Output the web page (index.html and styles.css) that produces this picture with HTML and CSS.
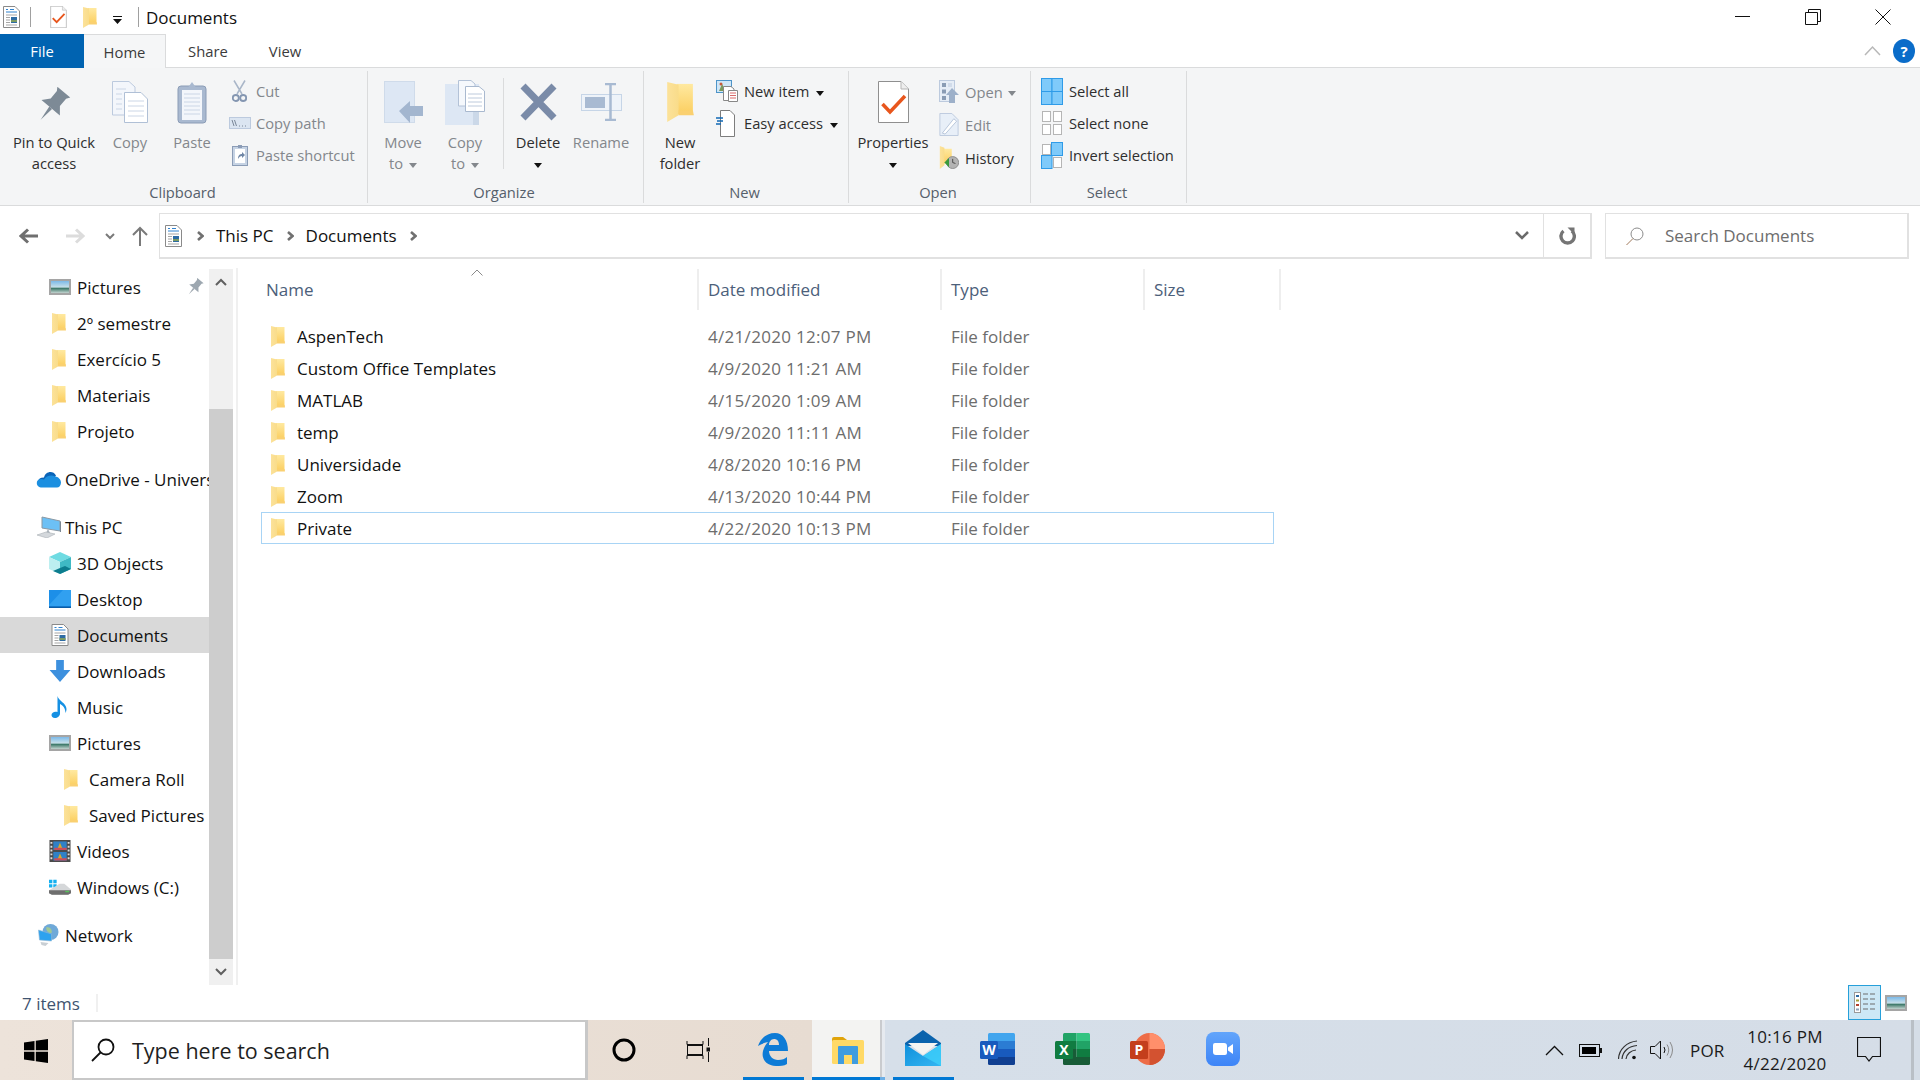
FILE: index.html
```html
<!DOCTYPE html>
<html lang="en">
<head>
<meta charset="utf-8">
<title>Documents</title>
<link rel="stylesheet" href="styles.css">
</head>
<body>
<svg class="sprite" xmlns="http://www.w3.org/2000/svg">
  <defs>
    <linearGradient id="fb" x1="0" y1="0" x2="0" y2="1"><stop offset="0" stop-color="#ffe9a0"/><stop offset="1" stop-color="#fbce5f"/></linearGradient>
    <linearGradient id="ff" x1="0" y1="0" x2="1" y2="0"><stop offset="0" stop-color="#fce29a"/><stop offset="1" stop-color="#f9dc8a"/></linearGradient>
    <linearGradient id="sky" x1="0" y1="0" x2="0" y2="1"><stop offset="0" stop-color="#6fb3e8"/><stop offset=".5" stop-color="#c6dfe9"/><stop offset=".6" stop-color="#3f7a6b"/><stop offset="1" stop-color="#dfe7e5"/></linearGradient>
    <linearGradient id="zm" x1="0" y1="0" x2="0" y2="1"><stop offset="0" stop-color="#62a5fb"/><stop offset="1" stop-color="#3d84f7"/></linearGradient>
    <linearGradient id="mailg" x1="0" y1="0" x2="1" y2="1"><stop offset="0" stop-color="#0f8fdb"/><stop offset="1" stop-color="#35b6f2"/></linearGradient>
  </defs>
  <symbol id="folder" viewBox="0 0 14 21"><path d="M5 1H13.500V17H5Z" fill="url(#fb)"/><path d="M0 0 6 1.500V17.500L0 21Z" fill="url(#ff)"/><path d="M13.500 15 14 17.500H6V15Z" fill="#fad070"/></symbol>
  <symbol id="doc" viewBox="0 0 17 22"><path d="M.5.5H12L16.500 5V21.500H.5Z" fill="#fff" stroke="#8a8a8a"/><path d="M3 3.500H5M7 3.500H11M3 6H14" stroke="#2f82cf"/><path d="M3 9H14M3 11.500H7M3 14H7M3 16.500H7M3 19H14" stroke="#a5a5a5"/><rect x="8" y="11" width="6" height="6" fill="#2d6ba3"/><rect x="8" y="14" width="6" height="2" fill="#7a9a62"/></symbol>
  <symbol id="prop" viewBox="0 0 31 42"><path d="M.5.5H23L30.500 8V41.500H.5Z" fill="#fff" stroke="#8f8f8f"/><path d="M23 .5V8H30.500" fill="#eee" stroke="#b5b5b5"/><path d="M4.500 23 12 31 27 15" fill="none" stroke="#e8561d" stroke-width="3.500"/></symbol>
  <symbol id="pin" viewBox="0 0 30 30"><g transform="rotate(40 15 15)" fill="#7d8a96"><path d="M8 1H22L20 4V12L25 18H5L10 12V4Z"/><path d="M13.500 18H16.500L15 31Z"/></g></symbol>
  <symbol id="copy" viewBox="0 0 36 42"><path d="M.5.5H17L23 6V34H.5Z" fill="#f3f6fb" stroke="#bccade"/><path d="M12.500 11.500H29L35.500 18V41.500H12.500Z" fill="#fff" stroke="#b0c0d6"/><path d="M4 8H14M4 13H10M4 18H10M4 23H10M4 28H10M16 20H32M16 25H32M16 30H32M16 35H32" stroke="#cbd6e6"/></symbol>
  <symbol id="paste" viewBox="0 0 30 43"><rect x="1" y="5" width="28" height="37" rx="3" fill="#a9b9d0" stroke="#8b9cb6"/><rect x="5" y="9" width="20" height="30" fill="#f3f6fb"/><path d="M7 13H23M7 17H23M7 21H23M7 25H23M7 29H23M7 33H23" stroke="#cbd6e6"/><path d="M10 8 15 1 20 8Z" fill="#a9b9d0"/></symbol>
  <symbol id="cut" viewBox="0 0 15 22"><path d="M2 .5 10 14M13 .5 5 14" stroke="#a9b6c8" stroke-width="1.500" fill="none"/><circle cx="3.800" cy="18" r="3" fill="none" stroke="#8496b1" stroke-width="1.800"/><circle cx="11.200" cy="18" r="3" fill="none" stroke="#8496b1" stroke-width="1.800"/></symbol>
  <symbol id="cpath" viewBox="0 0 22 12"><rect x=".5" y=".5" width="21" height="11" fill="#dbe5f1" stroke="#bccade"/><path d="M3 3 5 9M5.500 3 7.500 9" stroke="#7a8798" fill="none"/><path d="M10 9H11M13 9H14M16 9H17" stroke="#7a8798"/></symbol>
  <symbol id="pshort" viewBox="0 0 16 22"><rect x=".5" y="2.500" width="15" height="19" fill="#c6d3e4" stroke="#8b9cb6"/><rect x="3" y="5" width="10" height="14" fill="#fff"/><path d="M6 1H10V4H6Z" fill="#8b9cb6"/><path d="M6 15C6 11 8 10 10 10V8L13 11 10 14V12C8.500 12 7 13 6 15Z" fill="#6f86a6"/></symbol>
  <symbol id="moveto" viewBox="0 0 39 42"><rect width="31" height="42" fill="#dde7f4"/><rect x=".5" y=".5" width="30" height="41" fill="none" stroke="#cfdbea"/><path d="M15 30 26 20V25H39V35H26V42Z" fill="#a3b6cf"/></symbol>
  <symbol id="copyto" viewBox="0 0 40 45"><rect y="4" width="34" height="41" fill="#dde7f4"/><rect x="28" y="10" width="6" height="35" fill="#cbd8e8"/><path d="M13.500.5H26L30 4V26H13.500Z" fill="#f5f8fc" stroke="#b3c2d7"/><path d="M20.500 6.500H34L39.500 11V31.500H20.500Z" fill="#fff" stroke="#a9b9cf"/><path d="M23 14H37M23 18H37M23 22H37M23 26H37" stroke="#bdcadc"/></symbol>
  <symbol id="del" viewBox="0 0 37 38"><path d="M3 3 34 35M34 3 3 35" stroke="#7a8ba8" stroke-width="7" fill="none"/></symbol>
  <symbol id="rename" viewBox="0 0 41 38"><rect x=".5" y="11.500" width="40" height="16" fill="#eef3f9" stroke="#c6d5e7"/><rect x="4" y="14" width="20" height="11" fill="#a8bad2"/><path d="M24 1H35M24 37H35M29.500 1V37" stroke="#a8bad2" stroke-width="2.500" fill="none"/></symbol>
  <symbol id="newitem" viewBox="0 0 22 22"><rect x=".5" y=".5" width="15" height="12" fill="#cfe6f7" stroke="#4d94c9"/><path d="M3 11 6 4 10 11Z" fill="#7b9b5c"/><circle cx="5" cy="4" r="1.500" fill="#c6593a"/><path d="M7.500 6.500H15L18 9V20.500H7.500Z" fill="#fff" stroke="#888"/><path d="M12.500 10.500H21.500V21.500H12.500Z" fill="#fff" stroke="#888"/><path d="M14 13H20M14 15.500H20M14 18H20" stroke="#d96b6b"/></symbol>
  <symbol id="easy" viewBox="0 0 19 27"><path d="M4.500.5H14L18.500 5V26.500H4.500Z" fill="#fff" stroke="#7d7d7d"/><path d="M0 8H7M1 11H7M0 14H5" stroke="#1168b5" stroke-width="1.300"/></symbol>
  <symbol id="open" viewBox="0 0 20 23"><rect x=".5" y=".5" width="15" height="21" fill="#e6edf6" stroke="#bccade"/><path d="M3 3H7V7H3ZM3 9.500H7V13.500H3ZM3 16H7V20H3Z" fill="#8a9cb4"/><path d="M9 4H13M9 6H13" stroke="#bccade"/><path d="M7 15 13 8 20 15H16V23H10V15Z" fill="#9db0c9"/></symbol>
  <symbol id="edit" viewBox="0 0 20 24"><path d="M.5.5H13L19.500 7V23.500H.5Z" fill="#e8eff8" stroke="#bccade"/><path d="M3 21 15 6 18 8.500 6 22Z" fill="#fff" stroke="#b7c5d9"/></symbol>
  <symbol id="hist" viewBox="0 0 20 25"><path d="M3 3H13V19H3Z" fill="url(#fb)"/><path d="M0 0 5 2V21L0 25Z" fill="url(#ff)"/><circle cx="14" cy="18" r="6.500" fill="#b3b3b3" stroke="#8a8a8a"/><path d="M14 14V18L17 19" stroke="#444" fill="none"/><path d="M5 18 10 13V23Z" fill="#3a9a3d"/></symbol>
  <symbol id="selall" viewBox="0 0 22 27"><g fill="#7fcafa" stroke="#2f9be8"><rect x=".5" y=".5" width="10.500" height="13"/><rect x="11" y=".5" width="10.500" height="13"/><rect x=".5" y="13.500" width="10.500" height="13"/><rect x="11" y="13.500" width="10.500" height="13"/></g></symbol>
  <symbol id="selnone" viewBox="0 0 20 24"><g fill="#fff" stroke="#b5b5b5"><rect x=".5" y=".5" width="8" height="10"/><rect x="11.500" y=".5" width="8" height="10"/><rect x=".5" y="13.500" width="8" height="10"/><rect x="11.500" y="13.500" width="8" height="10"/></g></symbol>
  <symbol id="invert" viewBox="0 0 22 27"><rect x="1.500" y="2.500" width="8" height="10" fill="#fff" stroke="#b5b5b5"/><rect x="10.500" y=".5" width="11" height="13" fill="#7fcafa" stroke="#2f9be8"/><rect x=".5" y="13.500" width="10.500" height="13" fill="#7fcafa" stroke="#2f9be8"/><rect x="12.500" y="15.500" width="8" height="10" fill="#fff" stroke="#b5b5b5"/></symbol>
  <symbol id="pics" viewBox="0 0 22 16"><rect x="1" y="1" width="20" height="14" fill="url(#sky)" stroke="#a5a5a5" stroke-width="2"/></symbol>
  <symbol id="onedrive" viewBox="0 0 25 17"><path d="M8 7C9 1 17-1 20 5L14 14H5C2 14 0 7 8 7Z" fill="#0a64b8"/><path d="M19 6C22 6 25 9 25 12 25 15 23 17 21 17H6C3 17 0 15 1 11 2 8 6 8 8 9 10 5 16 4 19 6Z" fill="#1b8fe0"/></symbol>
  <symbol id="pc" viewBox="0 0 25 22"><path d="M6 1 24 5V15L6 12Z" fill="#6cc0f5" stroke="#8b98a3"/><path d="M24 5 25 6V16H24Z" fill="#7a8792"/><path d="M12 13 14 17H10Z" fill="#aab3bb"/><path d="M1 19 10 16 19 18 11 22Z" fill="#d4d8dc" stroke="#a9b0b6" stroke-width=".6"/></symbol>
  <symbol id="cube" viewBox="0 0 22 22"><path d="M11 0 22 5 11 10 0 5Z" fill="#6fdbe2"/><path d="M0 5 11 10V22L0 17Z" fill="#bdeff0"/><path d="M22 5 11 10V22L22 17Z" fill="#3fb9c4"/><path d="M11 16 16 14 22 17 11 22 4 19Z" fill="#0d7d8e"/></symbol>
  <symbol id="desk" viewBox="0 0 22 18"><rect width="22" height="18" fill="#1c8fe8"/><path d="M0 15 14 0H22V16H0Z" fill="#3ba6f3" opacity=".7"/><rect y="16.500" width="22" height="1.500" fill="#0b5da8"/></symbol>
  <symbol id="dl" viewBox="0 0 19 20"><path d="M6 0H13V9H19L9.500 20 0 9H6Z" fill="#3d90de"/></symbol>
  <symbol id="music" viewBox="0 0 17 22"><path d="M6 0C7 5 15 7 15 13 15 14.500 14.500 16 14 17 14 12 11 9 8.500 8V17.500C8.500 20 6 22 3.500 22 1 22 0 20.500 0 19 0 16.500 3 15 6 16Z" fill="#1590e3"/></symbol>
  <symbol id="video" viewBox="0 0 22 23"><rect width="22" height="23" fill="#4a4a4a"/><rect x="4" y="1.500" width="14" height="9" fill="#2f81c7"/><rect x="4" y="12.500" width="14" height="9" fill="#2f81c7"/><path d="M8 10 11 3 14 10ZM8 21 11 14 14 21Z" fill="#d9a72a"/><path d="M5 8H18V10.500H5ZM5 19H18V21.500H5Z" fill="#c84f5c"/><path d="M1 2H3V4H1ZM1 6H3V8H1ZM1 10H3V12H1ZM1 14H3V16H1ZM1 18H3V20H1ZM19 2H21V4H19ZM19 6H21V8H19ZM19 10H21V12H19ZM19 14H21V16H19ZM19 18H21V20H19Z" fill="#ddd"/></symbol>
  <symbol id="drive" viewBox="0 0 23 17"><path d="M0 1H3.500V4.500H0ZM4.500 1H8V4.500H4.500ZM0 5.500H3.500V9H0ZM4.500 5.500H8V9H4.500Z" fill="#14b0f0"/><path d="M0 12 11 5H16L23 11V15L20 16.500H3L0 15Z" fill="#d5d7d9"/><path d="M0 12H23V15L20 16.500H3L0 15Z" fill="#6e6e6e"/><rect x="17" y="12.500" width="4" height="1.500" fill="#57c25b"/></symbol>
  <symbol id="net" viewBox="0 0 22 22"><circle cx="13" cy="8" r="8" fill="#6fa9d8"/><path d="M9 3C13 3 15 6 14 9 11 9 8 7 9 3Z" fill="#a0c995"/><path d="M1 6 14 10V17L2 16Z" fill="#2ea2ee" stroke="#8eb7d5" stroke-width=".6"/><path d="M3 18 11 19 8 22 4 21Z" fill="#c9cfd4"/></symbol>
  <symbol id="edge" viewBox="0 0 30 33"><path fill-rule="evenodd" d="M0 13C3 4 10 0 17 0 25 0 30 7 30 18H11C11 23 15 27 20 27 24 27 27 26 29 24V31C26 33 22 33 18 33 9 33 3 27 5 18 6 14 8 11 10 9 6 10 3 11 0 13ZM11 12H21C21 8 19 6 16 6 13 6 11 9 11 12Z" fill="#0d7bd6"/></symbol>
  <symbol id="explorer" viewBox="0 0 32 27"><path d="M0 2Q0 0 2 0H11L15 3V6H0Z" fill="#e0a30a"/><rect y="3" width="32" height="24" rx="1.500" fill="#ffd966"/><path d="M6 10Q6 9 7 9H25Q26 9 26 10V27H20V18H12V27H6Z" fill="#3f9ce0"/></symbol>
  <symbol id="mailicon" viewBox="0 0 36 36"><path d="M0 13 18 0 36 13V16H0Z" fill="#0a63ad"/><path d="M3 13H33L18 25Z" fill="#f4f4f2"/><path d="M0 14 18 26 36 14V36H0Z" fill="url(#mailg)"/><path d="M18 26 36 14V36Z" fill="#3fd0fa" opacity=".8"/></symbol>
</svg>

<div class="window">
  <header class="titlebar">
    <svg class="qdoc"><use href="#doc"/></svg>
    <span class="qsep"></span>
    <svg class="qprop"><use href="#prop"/></svg>
    <svg class="qfold"><use href="#folder"/></svg>
    <svg class="qdrop" viewBox="0 0 9 8"><path d="M0 0H9V1H0ZM0 3H9L4.500 8Z" fill="#111"/></svg>
    <span class="qsep qsep-b"></span>
    <span class="wintitle">Documents</span>
    <div class="winctl">
      <svg class="ctl" viewBox="0 0 16 16"><path d="M0 7.500H15" stroke="#111" fill="none"/></svg>
      <svg class="ctl" viewBox="0 0 16 16"><path d="M3.500 3.500V.5H15.500V12.500H12.500M.5 3.500H12.500V15.500H.5Z" stroke="#111" fill="none"/></svg>
      <svg class="ctl" viewBox="0 0 16 16"><path d="M.5.5 15.500 15.500M15.500.5 .5 15.500" stroke="#111" fill="none"/></svg>
    </div>
  </header>

  <nav class="tabs">
    <span class="tab tab-file">File</span>
    <span class="tab tab-home">Home</span>
    <span class="tab tab-share">Share</span>
    <span class="tab tab-view">View</span>
    <div class="tabs-right">
      <svg class="collapse" viewBox="0 0 17 11"><path d="M1 10 8.500 2 16 10" stroke="#b8b8b8" stroke-width="1.500" fill="none"/></svg>
      <span class="help">?</span>
    </div>
  </nav>

  <section class="ribbon">
    <div class="group g-clip">
      <div class="items">
        <div class="lg w-pin"><div class="lg-icon"><svg class="i30"><use href="#pin"/></svg></div><div class="lg-label">Pin to Quick<br>access</div></div>
        <div class="lg w-copy off"><div class="lg-icon"><svg class="i36"><use href="#copy"/></svg></div><div class="lg-label">Copy</div></div>
        <div class="lg w-paste off"><div class="lg-icon"><svg class="i30b"><use href="#paste"/></svg></div><div class="lg-label">Paste</div></div>
        <div class="small s-clip off">
          <div class="sm"><svg class="slot15"><use href="#cut"/></svg><span>Cut</span></div>
          <div class="sm"><svg class="slot22"><use href="#cpath"/></svg><span>Copy path</span></div>
          <div class="sm"><svg class="slot16"><use href="#pshort"/></svg><span>Paste shortcut</span></div>
        </div>
      </div>
      <div class="group-label">Clipboard</div>
    </div>
    <div class="group g-org">
      <div class="items">
        <div class="lg w-move off"><div class="lg-icon"><svg class="i39"><use href="#moveto"/></svg></div><div class="lg-label">Move<br>to <i class="caret"></i></div></div>
        <div class="lg w-cto off"><div class="lg-icon"><svg class="i40"><use href="#copyto"/></svg></div><div class="lg-label">Copy<br>to <i class="caret"></i></div></div>
        <span class="vsep"></span>
        <div class="lg w-del"><div class="lg-icon"><svg class="i37"><use href="#del"/></svg></div><div class="lg-label">Delete<br><i class="caret dark"></i></div></div>
        <div class="lg w-ren off"><div class="lg-icon"><svg class="i41"><use href="#rename"/></svg></div><div class="lg-label">Rename</div></div>
      </div>
      <div class="group-label">Organize</div>
    </div>
    <div class="group g-new">
      <div class="items">
        <div class="lg w-nf"><div class="lg-icon"><svg class="i27"><use href="#folder"/></svg></div><div class="lg-label">New<br>folder</div></div>
        <div class="small s-new">
          <div class="sm"><svg class="slot22"><use href="#newitem"/></svg><span>New item <i class="caret dark"></i></span></div>
          <div class="sm"><svg class="slot19"><use href="#easy"/></svg><span>Easy access <i class="caret dark"></i></span></div>
        </div>
      </div>
      <div class="group-label">New</div>
    </div>
    <div class="group g-open">
      <div class="items">
        <div class="lg w-prop"><div class="lg-icon"><svg class="i31"><use href="#prop"/></svg></div><div class="lg-label">Properties<br><i class="caret dark"></i></div></div>
        <div class="small s-open">
          <div class="sm off"><svg class="slot20"><use href="#open"/></svg><span>Open <i class="caret"></i></span></div>
          <div class="sm off"><svg class="slot20"><use href="#edit"/></svg><span>Edit</span></div>
          <div class="sm"><svg class="slot20"><use href="#hist"/></svg><span>History</span></div>
        </div>
      </div>
      <div class="group-label">Open</div>
    </div>
    <div class="group g-sel">
      <div class="items">
        <div class="small s-sel">
          <div class="sm"><svg class="slot22"><use href="#selall"/></svg><span>Select all</span></div>
          <div class="sm"><svg class="slot20s"><use href="#selnone"/></svg><span>Select none</span></div>
          <div class="sm"><svg class="slot22"><use href="#invert"/></svg><span>Invert selection</span></div>
        </div>
      </div>
      <div class="group-label">Select</div>
    </div>
  </section>

  <section class="addr">
    <svg class="ab-arrow" viewBox="0 0 20 16"><path d="M19 8H3M9 1.500 2 8 9 14.500" stroke="#6f6f6f" stroke-width="3" fill="none"/></svg>
    <svg class="ab-arrow ab-fwd" viewBox="0 0 20 16"><path d="M1 8H17M11 1.500 18 8 11 14.500" stroke="#dcdcdc" stroke-width="3" fill="none"/></svg>
    <svg class="ab-down" viewBox="0 0 10 7"><path d="M1 1 5 5 9 1" stroke="#7a7a7a" stroke-width="2" fill="none"/></svg>
    <svg class="ab-up" viewBox="0 0 16 20"><path d="M8 20V2M1 9 8 2 15 9" stroke="#7a7a7a" stroke-width="2" fill="none"/></svg>
    <div class="ab-box">
      <svg class="ab-doc"><use href="#doc"/></svg>
      <svg class="crumb" viewBox="0 0 7 12"><path d="M1 2 5.500 6 1 10" stroke="#707070" stroke-width="2.600" fill="none"/></svg>
      <span class="crumb-text">This PC</span>
      <svg class="crumb" viewBox="0 0 7 12"><path d="M1 2 5.500 6 1 10" stroke="#707070" stroke-width="2.600" fill="none"/></svg>
      <span class="crumb-text">Documents</span>
      <svg class="crumb" viewBox="0 0 7 12"><path d="M1 2 5.500 6 1 10" stroke="#707070" stroke-width="2.600" fill="none"/></svg>
      <svg class="ab-drop" viewBox="0 0 14 9"><path d="M1 1 7 7 13 1" stroke="#6a6a6a" stroke-width="2.500" fill="none"/></svg>
      <div class="ab-refresh"><svg viewBox="0 0 18 18"><path d="M5.500 4A6.700 6.700 0 1 0 13.800 4" stroke="#757575" stroke-width="3.400" fill="none"/><path d="M9.500 .5H16.500V7.500Z" fill="#757575"/></svg></div>
    </div>
    <div class="ab-search">
      <svg class="srch" viewBox="0 0 18 18"><circle cx="11" cy="7" r="6" fill="none" stroke="#8c8c8c"/><path d="M7 11.500.5 18" stroke="#a0785a" fill="none"/></svg>
      <span>Search Documents</span>
    </div>
  </section>

  <main class="main">
    <aside class="nav">
      <div class="row l2"><svg class="ni"><use href="#pics"/></svg><span class="nt">Pictures</span><svg class="rowpin"><use href="#pin"/></svg></div>
      <div class="row l2 f"><svg class="nf"><use href="#folder"/></svg><span class="nt">2º semestre</span></div>
      <div class="row l2 f"><svg class="nf"><use href="#folder"/></svg><span class="nt">Exercício 5</span></div>
      <div class="row l2 f"><svg class="nf"><use href="#folder"/></svg><span class="nt">Materiais</span></div>
      <div class="row l2 f"><svg class="nf"><use href="#folder"/></svg><span class="nt">Projeto</span></div>
      <div class="row l1 gap"><svg class="n1"><use href="#onedrive"/></svg><span class="nt">OneDrive - University</span></div>
      <div class="row l1 gap"><svg class="n1"><use href="#pc"/></svg><span class="nt">This PC</span></div>
      <div class="row l2"><svg class="ni"><use href="#cube"/></svg><span class="nt">3D Objects</span></div>
      <div class="row l2"><svg class="ni"><use href="#desk"/></svg><span class="nt">Desktop</span></div>
      <div class="row l2 sel"><svg class="ni"><use href="#doc"/></svg><span class="nt">Documents</span></div>
      <div class="row l2"><svg class="ni"><use href="#dl"/></svg><span class="nt">Downloads</span></div>
      <div class="row l2"><svg class="ni"><use href="#music"/></svg><span class="nt">Music</span></div>
      <div class="row l2"><svg class="ni"><use href="#pics"/></svg><span class="nt">Pictures</span></div>
      <div class="row l3"><svg class="nf"><use href="#folder"/></svg><span class="nt">Camera Roll</span></div>
      <div class="row l3"><svg class="nf"><use href="#folder"/></svg><span class="nt">Saved Pictures</span></div>
      <div class="row l2"><svg class="ni"><use href="#video"/></svg><span class="nt">Videos</span></div>
      <div class="row l2"><svg class="ni"><use href="#drive"/></svg><span class="nt">Windows (C:)</span></div>
      <div class="row l1 gap"><svg class="n1"><use href="#net"/></svg><span class="nt">Network</span></div>
    </aside>
    <div class="vscroll">
      <div class="sb-btn"><svg viewBox="0 0 12 8"><path d="M1 7 6 2 11 7" stroke="#606060" stroke-width="2" fill="none"/></svg></div>
      <div class="sb-track"></div>
      <div class="sb-btn sb-thumb"></div>
      <div class="sb-btn"><svg viewBox="0 0 12 8"><path d="M1 1 6 6 11 1" stroke="#606060" stroke-width="2" fill="none"/></svg></div>
    </div>
    <section class="list">
      <div class="lhead">
        <div class="hc hc-name">Name<svg class="sort" viewBox="0 0 12 7"><path d="M.5 6.500 6 1 11.500 6.500" stroke="#8a8a8a" fill="none"/></svg></div>
        <div class="hc hc-date">Date modified</div>
        <div class="hc hc-type">Type</div>
        <div class="hc hc-size">Size</div>
      </div>
      <div class="lrows">
        <div class="lr"><svg class="lf"><use href="#folder"/></svg><span class="ln">AspenTech</span><span class="ld">4/21/2020 12:07 PM</span><span class="lt">File folder</span></div>
        <div class="lr"><svg class="lf"><use href="#folder"/></svg><span class="ln">Custom Office Templates</span><span class="ld">4/9/2020 11:21 AM</span><span class="lt">File folder</span></div>
        <div class="lr"><svg class="lf"><use href="#folder"/></svg><span class="ln">MATLAB</span><span class="ld">4/15/2020 1:09 AM</span><span class="lt">File folder</span></div>
        <div class="lr"><svg class="lf"><use href="#folder"/></svg><span class="ln">temp</span><span class="ld">4/9/2020 11:11 AM</span><span class="lt">File folder</span></div>
        <div class="lr"><svg class="lf"><use href="#folder"/></svg><span class="ln">Universidade</span><span class="ld">4/8/2020 10:16 PM</span><span class="lt">File folder</span></div>
        <div class="lr"><svg class="lf"><use href="#folder"/></svg><span class="ln">Zoom</span><span class="ld">4/13/2020 10:44 PM</span><span class="lt">File folder</span></div>
        <div class="lr focus"><svg class="lf"><use href="#folder"/></svg><span class="ln">Private</span><span class="ld">4/22/2020 10:13 PM</span><span class="lt">File folder</span></div>
      </div>
    </section>
  </main>

  <footer class="status">
    <span class="count">7 items</span>
    <span class="st-sep"></span>
    <div class="views">
      <div class="vbtn"><svg viewBox="0 0 21 21"><rect x=".5" y=".5" width="6" height="20" fill="#fff" stroke="#9a9a9a"/><path d="M2 3H5V5H2Z" fill="#2d6ba3"/><path d="M2 7.500H5V9.500H2Z" fill="#a7a03c"/><path d="M2 12H5V14H2Z" fill="#b3402c"/><path d="M2 16.500H5V18.500H2Z" fill="#8fa3b8"/><path d="M9 2H14M16 2H21M9 7H14M16 7H21M9 12H14M16 12H21M9 17H14M16 17H21" stroke="#6d6d6d"/></svg></div>
      <svg class="vthumb"><use href="#pics"/></svg>
    </div>
  </footer>

  <footer class="taskbar">
    <div class="tb-start"><svg viewBox="0 0 24 24"><path d="M0 3.500 10.500 2V11.300H0ZM11.800 1.800 24 0V11.300H11.800ZM0 12.700H10.500V22L0 20.500ZM11.800 12.700H24V24L11.800 22.200Z" fill="#000"/></svg></div>
    <div class="tb-search">
      <svg class="tb-glass" viewBox="0 0 24 24"><circle cx="15" cy="9" r="7.500" fill="none" stroke="#111" stroke-width="1.800"/><path d="M9.500 14.500 1 23" stroke="#111" stroke-width="1.800" fill="none"/></svg>
      <span>Type here to search</span>
    </div>
    <div class="tb-item tb-cortana"><svg viewBox="0 0 24 24" class="ti24"><circle cx="12" cy="12" r="10" fill="none" stroke="#000" stroke-width="3"/></svg></div>
    <div class="tb-item"><svg viewBox="0 0 24 24" class="ti24"><path d="M1 3V6.500H17V3M1 21V17.500H17V21M22.500 0V8M22.500 14V24" stroke="#111" fill="none"/><rect x="1.500" y="7.500" width="15" height="9" fill="none" stroke="#111"/><rect x="20.500" y="9.500" width="4" height="4" fill="#111"/></svg></div>
    <div class="tb-item on"><svg class="ti-edge"><use href="#edge"/></svg></div>
    <div class="tb-item on active"><svg class="ti-exp"><use href="#explorer"/></svg></div>
    <div class="tb-item on"><svg class="ti-mail"><use href="#mailicon"/></svg></div>
    <div class="tb-item">
      <svg class="ti-app" viewBox="0 0 35 32"><path d="M8 1.500Q8 0 9.500 0H33.500Q35 0 35 1.500V8H8Z" fill="#41a5ee"/><rect x="8" y="8" width="27" height="8" fill="#2b7cd3"/><rect x="8" y="16" width="27" height="8" fill="#185abd"/><path d="M8 24H35V30.500Q35 32 33.500 32H9.500Q8 32 8 30.500Z" fill="#103f91"/><rect y="8" width="18" height="18" rx="1.500" fill="#185abd"/><text x="9" y="21.500" class="app-letter">W</text></svg>
    </div>
    <div class="tb-item">
      <svg class="ti-app" viewBox="0 0 35 32"><path d="M8 1.500Q8 0 9.500 0H21.500V8H8Z" fill="#21a366"/><path d="M21.500 0H33.500Q35 0 35 1.500V8H21.500Z" fill="#33c481"/><rect x="8" y="8" width="13.500" height="8" fill="#107c41"/><rect x="21.500" y="8" width="13.500" height="8" fill="#21a366"/><rect x="8" y="16" width="13.500" height="8" fill="#185c37"/><rect x="21.500" y="16" width="13.500" height="8" fill="#107c41"/><path d="M8 24H35V30.500Q35 32 33.500 32H9.500Q8 32 8 30.500Z" fill="#185c37"/><rect y="8" width="18" height="18" rx="1.500" fill="#107c41"/><text x="9" y="21.500" class="app-letter">X</text></svg>
    </div>
    <div class="tb-item">
      <svg class="ti-app" viewBox="0 0 35 32"><ellipse cx="19.500" cy="16" rx="15.500" ry="16" fill="#ed6c47"/><path d="M19.500 0A15.500 16 0 0 1 35 16H19.500Z" fill="#ff8f6b"/><path d="M19.500 16H35A15.500 16 0 0 1 19.500 32Z" fill="#d35230"/><rect y="8" width="18" height="18" rx="1.500" fill="#c43e1c"/><text x="9" y="21.500" class="app-letter">P</text></svg>
    </div>
    <div class="tb-item">
      <svg class="ti-zoom" viewBox="0 0 34 34"><rect width="34" height="34" rx="8" fill="url(#zm)"/><path d="M7 13Q7 11 9 11H18Q21 11 21 14V21Q21 23 19 23H10Q7 23 7 20ZM22 15.500 27 12V22L22 18.500Z" fill="#fff"/></svg>
    </div>
    <div class="tray">
      <svg class="tr-chev" viewBox="0 0 19 11"><path d="M1 10 9.500 1.500 18 10" stroke="#111" stroke-width="1.300" fill="none"/></svg>
      <svg class="tr-bat" viewBox="0 0 23 13"><rect x=".5" y=".5" width="20" height="12" fill="none" stroke="#111"/><rect x="3" y="3" width="14" height="7" fill="#000"/><rect x="21" y="4" width="2" height="5" fill="#111"/></svg>
      <svg class="tr-wifi" viewBox="0 0 20 20"><g fill="none" stroke="#333" stroke-width="1.200"><path d="M.5 19C1 9 9 2 19 1"/><path d="M4 19C4.500 11 11 6 19 5.500"/><path d="M8 19C8.500 14 13 10.500 18 10"/></g><circle cx="16" cy="17.500" r="1.800" fill="#111"/></svg>
      <svg class="tr-vol" viewBox="0 0 24 20"><path d="M.5 6.500H5L10.500 1V19L5 13.500H.5Z" fill="none" stroke="#111"/><path d="M14 7Q16 10 14 13" stroke="#111" fill="none"/><path d="M17 4.500Q20.500 10 17 15.500M20 2Q25 10 20 18" stroke="#8a8a8a" fill="none"/></svg>
      <span class="tr-lang">POR</span>
      <div class="tr-clock"><span>10:16 PM</span><span>4/22/2020</span></div>
      <svg class="tr-note" viewBox="0 0 24 26"><path d="M.5.5H23.500V19.500H15.500L12 24 8.500 19.500H.5Z" fill="none" stroke="#111" stroke-width="1.200"/></svg>
      <span class="tr-strip"></span>
    </div>
  </footer>
</div>
</body>
</html>
```

FILE: styles.css
```css
* { box-sizing: border-box; }
html, body { margin: 0; padding: 0; background: #fff; }
body { font-family: "Open Sans", "Noto Sans", "Liberation Sans", sans-serif; font-size: 17px; color: #111; overflow: hidden; }
svg { display: block; flex: none; }
.sprite { position: absolute; width: 0; height: 0; overflow: hidden; }
.window { width: 1920px; height: 1080px; display: flex; flex-direction: column; overflow: hidden; }

/* title bar */
.titlebar { height: 34px; display: flex; align-items: center; flex: none; }
.qdoc { width: 17px; height: 22px; margin-left: 3px; }
.qsep { width: 1px; height: 20px; background: #a0a0a0; margin-left: 10px; }
.qprop { width: 17px; height: 22px; margin-left: 19px; }
.qfold { width: 14px; height: 21px; margin-left: 16px; }
.qdrop { width: 9px; height: 8px; margin: 6px 0 0 16px; }
.qsep-b { margin-left: 16px; }
.wintitle { margin-left: 7px; }
.winctl { margin-left: auto; display: flex; align-items: center; gap: 54px; padding-right: 29px; }
.ctl { width: 16px; height: 16px; }

/* tabs */
.tabs { height: 34px; flex: none; display: flex; border-bottom: 1px solid #dadbdc; font-size: 14.8px; color: #3b3b3b; }
.tab { display: flex; align-items: center; justify-content: center; }
.tab-file { width: 84px; background: #0063b1; color: #fff; margin-bottom: -1px; }
.tab-home { width: 82px; background: #f5f6f7; border: 1px solid #dadbdc; border-bottom: 0; border-left: 0; margin-bottom: -1px; }
.tab-share { width: 76px; margin-left: 4px; }
.tab-view { width: 80px; margin-left: -1px; }
.tabs-right { margin-left: auto; display: flex; align-items: center; gap: 12px; padding-right: 5px; }
.collapse { width: 17px; height: 11px; }
.help { width: 22px; height: 24px; border-radius: 50%; background: #0a6cc9; color: #fff; font: bold 15px "Open Sans", sans-serif; display: flex; align-items: center; justify-content: center; }

/* ribbon */
.ribbon { height: 138px; flex: none; display: flex; background: #f4f5f6; border-bottom: 1px solid #dadbdc; padding-top: 3px; font-size: 14.7px; color: #2e2e2e; }
.group { height: 132px; display: flex; flex-direction: column; border-right: 1px solid #dadbdc; }
.g-clip { width: 368px; }
.g-org { width: 276px; }
.g-new { width: 205px; }
.g-open { width: 182px; }
.g-sel { width: 156px; }
.items { flex: 1; display: flex; min-height: 0; }
.group-label { height: 20px; line-height: 20px; text-align: center; color: #56606b; padding-right: 3px; margin-bottom: 1px; }
.g-clip .group-label { padding-right: 2px; }
.lg { display: flex; flex-direction: column; align-items: center; padding-top: 6px; flex: none; }
.lg-icon { height: 50px; display: flex; align-items: center; justify-content: center; }
.lg-label { margin-top: 5px; line-height: 21px; text-align: center; white-space: nowrap; }
.off { color: #83878c; }
.w-pin { width: 108px; }
.w-copy { width: 44px; }
.w-paste { width: 80px; }
.w-move { width: 70px; }
.w-cto { width: 54px; }
.w-del { width: 68px; }
.w-ren { width: 58px; }
.w-nf { width: 72px; }
.w-prop { width: 88px; }
.vsep { width: 1px; height: 91px; background: #dadbdc; margin: 7px 0 0 11px; flex: none; }
.i30 { width: 36px; height: 36px; margin: 6px 2px 0 0; }
.i36 { width: 36px; height: 42px; }
.i30b { width: 30px; height: 43px; }
.i39 { width: 39px; height: 42px; }
.i40 { width: 40px; height: 45px; }
.i37 { width: 37px; height: 38px; }
.i41 { width: 41px; height: 38px; }
.i27 { width: 27px; height: 40px; }
.i31 { width: 31px; height: 42px; }
.small { padding-top: 4px; flex: none; }
.sm { height: 32px; display: flex; align-items: center; white-space: nowrap; }
.s-open .sm { height: 33px; }
.slot15 { width: 15px; height: 22px; margin-right: 9px; }
.slot22 { width: 22px; height: 22px; margin-right: 6px; }
.slot16 { width: 16px; height: 22px; margin-right: 8px; }
.slot19 { width: 19px; height: 27px; margin-right: 9px; }
.slot20 { width: 20px; height: 23px; margin-right: 6px; }
.slot20s { width: 20px; height: 24px; margin: 0 7px 0 1px; }
.s-clip .slot22 { margin: 0 5px 0 -3px; width: 22px; height: 12px; }
.s-sel { padding-left: 10px; }
.s-sel .slot22 { height: 27px; }
.s-open { margin-left: 2px; }
.caret { display: inline-block; width: 0; height: 0; border: 4px solid transparent; border-top: 5px solid #83878c; border-bottom: 0; vertical-align: middle; margin-left: 2px; }
.caret.dark { border-top-color: #111; margin-left: 3px; }
.lg-label .caret.dark { margin-left: 0; }

/* address bar */
.addr { height: 62px; flex: none; display: flex; align-items: center; padding-bottom: 2px; }
.ab-arrow { width: 20px; height: 16px; margin-left: 19px; }
.ab-fwd { margin-left: 26px; }
.ab-down { width: 10px; height: 7px; margin-left: 20px; }
.ab-up { width: 16px; height: 20px; margin-left: 17px; }
.ab-box { width: 1433px; height: 46px; margin-left: 11px; border: 2px solid #e1e1e1; border-width: 1px 2px 2px 1px; display: flex; align-items: center; }
.ab-doc { width: 17px; height: 22px; margin-left: 5px; }
.crumb { width: 7px; height: 12px; margin: 0 12px 0 15px; }
.crumb-text { color: #111; }
.crumb-text + .crumb { margin-left: 13px; margin-right: 12px; }
.ab-drop { width: 14px; height: 9px; margin-left: auto; margin-right: 14px; }
.ab-refresh { width: 47px; height: 100%; border-left: 1px solid #e1e1e1; display: flex; align-items: center; justify-content: center; }
.ab-refresh svg { width: 18px; height: 18px; }
.ab-search { width: 304px; height: 46px; margin-left: 13px; border: 1px solid #e1e1e1; border-width: 1px 2px 2px 1px; display: flex; align-items: center; color: #6d6d6d; padding-left: 20px; }
.srch { width: 18px; height: 18px; margin-right: 21px; }

/* main */
.main { flex: 1; min-height: 0; display: flex; }
.nav { width: 209px; flex: none; padding-top: 1px; overflow: hidden; }
.row { height: 36px; display: flex; align-items: center; white-space: nowrap; overflow: hidden; }
.row.gap { margin-top: 12px; }
.l2 { padding-left: 49px; }
.l1 { padding-left: 36px; }
.l3 { padding-left: 64px; }
.ni { width: 22px; height: 22px; margin-right: 6px; }
.nf { width: 14px; height: 21px; margin: 0 11px 0 3px; }
.l3 .nf { margin: 0 11px 0 0; }
.n1 { width: 25px; height: 22px; margin-right: 4px; }
.row.sel { background: #d9d9d9; }
.rowpin { width: 18px; height: 18px; margin-left: auto; margin-right: 5px; opacity: .75; }
.nt { flex: none; }
.vscroll { width: 24px; flex: none; margin-top: 1px; height: 716px; display: flex; flex-direction: column; background: #f0f0f0; }
.sb-btn { height: 26px; display: flex; align-items: center; justify-content: center; flex: none; }
.sb-btn svg { width: 12px; height: 8px; }
.sb-track { height: 114px; flex: none; }
.sb-thumb { height: 550px; background: #cdcdcd; }
.list { flex: 1; margin-left: 3px; border-left: 2px solid #f0f0f0; padding-left: 23px; height: 717px; }
.lhead { display: flex; height: 41px; margin-top: 1px; color: #4c607a; }
.hc { display: flex; align-items: center; border-right: 2px solid #eeeeee; position: relative; }
.hc-name { width: 438px; padding-left: 5px; }
.hc-date { width: 243px; padding-left: 9px; }
.hc-type { width: 203px; padding-left: 9px; }
.hc-size { width: 136px; padding-left: 9px; }
.sort { position: absolute; left: 210px; top: 0; width: 12px; height: 7px; }
.lrows { margin-top: 10px; width: 1013px; }
.lr { height: 32px; display: flex; align-items: center; border: 1px solid transparent; }
.lr.focus { border-color: #a8d4f5; }
.lf { width: 14px; height: 21px; margin-left: 9px; }
.ln { width: 411px; margin-left: 12px; color: #111; white-space: nowrap; flex: none; }
.ld { width: 243px; color: #6d6d6d; flex: none; letter-spacing: .3px; }
.lt { color: #6d6d6d; }

/* status */
.status { height: 35px; flex: none; display: flex; align-items: center; color: #3f5470; font-size: 17px; }
.count { margin-left: 22px; width: 74px; white-space: nowrap; padding-top: 2px; }
.st-sep { width: 2px; height: 18px; background: #f0f0f0; }
.views { margin-left: auto; display: flex; align-items: center; padding-right: 13px; }
.vbtn { width: 33px; height: 35px; background: #cce8f6; border: 1px solid #26a0da; display: flex; align-items: center; justify-content: center; }
.vbtn svg { width: 21px; height: 21px; }
.vthumb { width: 22px; height: 16px; margin-left: 4px; }

/* taskbar */
.taskbar { height: 60px; flex: none; display: flex; align-items: stretch; background: linear-gradient(90deg, #ede3da 0, #e7dcd2 810px, #d6dfe9 885px, #d5dde7 100%); }
.tb-start { width: 72px; display: flex; align-items: center; justify-content: center; flex: none; }
.tb-start svg { width: 24px; height: 24px; margin-top: 2px; }
.tb-search { width: 516px; background: #fff; border: 2px solid #c8c8c8; border-right-width: 3px; flex: none; display: flex; align-items: center; font-size: 21.5px; color: #1f1f1f; }
.tb-glass { width: 24px; height: 24px; margin: 0 17px; }
.tb-item { width: 75px; flex: none; display: flex; align-items: center; justify-content: center; position: relative; }
.tb-cortana { width: 72px; }
.tb-item.on::after { content: ""; position: absolute; left: 8px; right: 6px; bottom: 0; height: 3px; background: #0078d4; }
.tb-item.active { background: linear-gradient(90deg, transparent 2px, #f3f3f2 2px, #f3f3f2 70px, #c9cbce 70px, #c9cbce 72px, #e6eaef 72px); }
.tb-item.active::after { left: 2px; right: 0; background: linear-gradient(90deg, #0078d4 68px, #6aaee6 68px); }
.ti24 { width: 24px; height: 24px; }
.ti-edge { width: 30px; height: 33px; margin-top: -2px; }
.ti-exp { width: 32px; height: 27px; }
.ti-mail { width: 36px; height: 36px; margin-top: -4px; }
.ti-app { width: 35px; height: 32px; margin-top: -2px; }
.ti-zoom { width: 34px; height: 34px; margin-top: -2px; }
.app-letter { font: bold 14px "Open Sans", sans-serif; fill: #fff; text-anchor: middle; }
.tray { margin-left: auto; display: flex; align-items: center; padding-right: 6px; }
.tr-chev { width: 19px; height: 11px; margin-right: 15px; }
.tr-bat { width: 23px; height: 13px; margin-right: 16px; }
.tr-wifi { width: 20px; height: 20px; margin-right: 12px; }
.tr-vol { width: 24px; height: 20px; margin-right: 16px; }
.tr-lang { width: 36px; white-space: nowrap; color: #1b1b1b; letter-spacing: .2px; }
.tr-clock { width: 96px; margin-left: 11px; display: flex; flex-direction: column; align-items: center; color: #1b1b1b; line-height: 27px; letter-spacing: .3px; }
.tr-note { width: 24px; height: 26px; margin-left: 24px; }
.tr-strip { width: 3px; height: 60px; background: #b9bfc6; margin-left: 30px; }
```
